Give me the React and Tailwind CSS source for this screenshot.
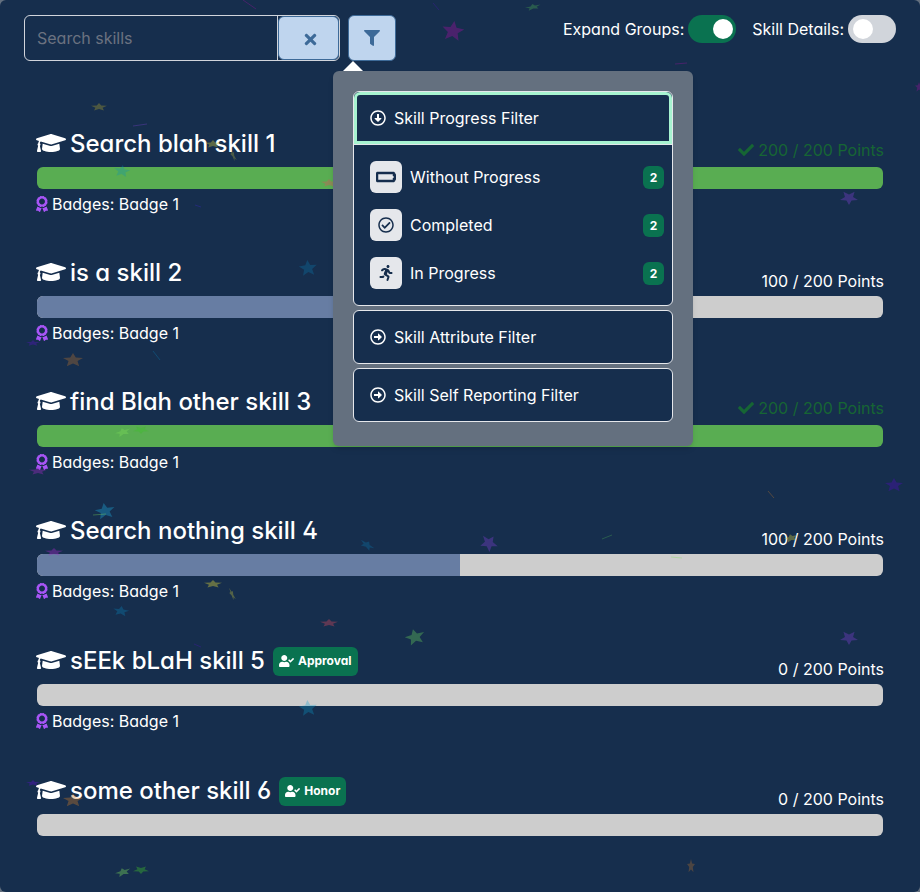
import { useState } from "react";
import {
  FaAward,
  FaBatteryEmpty,
  FaCheck,
  FaFilter,
  FaGraduationCap,
  FaRegArrowAltCircleDown,
  FaRegArrowAltCircleRight,
  FaRegCheckCircle,
  FaRunning,
  FaTimes,
  FaUserCheck,
} from "react-icons/fa";

const skills = [
  { name: "Search blah skill 1", points: 200, badge: "Badge 1" },
  { name: "is a skill 2", points: 100, badge: "Badge 1" },
  { name: "find Blah other skill 3", points: 200, badge: "Badge 1" },
  { name: "Search nothing skill 4", points: 100, badge: "Badge 1" },
  { name: "sEEk bLaH skill 5", points: 0, badge: "Badge 1", tag: "Approval" },
  { name: "some other skill 6", points: 0, tag: "Honor" },
];

const progressFilters = [
  { label: "Without Progress", count: 2, icon: <FaBatteryEmpty size={20} strokeWidth={16} stroke="currentColor" /> },
  { label: "Completed", count: 2, icon: <FaRegCheckCircle size={16} /> },
  { label: "In Progress", count: 2, icon: <FaRunning size={16} /> },
];

// x, y, half width, half height, rotation, colour, opacity
const stars = [
  [453, 31, 11, 10, 8, "#a10fa0", 0.38],
  [533, 7, 8, 3, -12, "#4caf50", 0.35],
  [919, 87, 4, 5, 0, "#a10fa0", 0.35],
  [99, 107, 8, 4, 0, "#b5a52a", 0.35],
  [213, 144, 8, 4, 0, "#c6c23c", 0.4],
  [233, 155, 2, 7, -25, "#c6c23c", 0.3],
  [122, 171, 8, 6, 8, "#0a93b5", 0.3],
  [329, 183, 8, 4, 0, "#e84a5f", 0.35],
  [849, 198, 9, 7, 180, "#7c3fd0", 0.38],
  [308, 268, 9, 8, -5, "#0a7fb5", 0.3],
  [33, 343, 7, 3, 0, "#5b12c9", 0.35],
  [73, 360, 10, 7, 0, "#c97a2a", 0.32],
  [123, 432, 8, 4, -18, "#7ee05a", 0.35],
  [141, 430, 8, 4, 180, "#3fbf2a", 0.4],
  [38, 471, 9, 4, 0, "#a32ac9", 0.38],
  [894, 485, 9, 7, 0, "#4b10b5", 0.4],
  [105, 511, 10, 8, -10, "#1f9fd0", 0.4],
  [54, 552, 9, 4, 0, "#a32ac9", 0.4],
  [367, 545, 8, 4, 32, "#0a7fb5", 0.3],
  [489, 543, 9, 8, 35, "#7c3fd0", 0.38],
  [791, 538, 7, 4, -15, "#c6c23c", 0.4],
  [213, 584, 9, 4, 0, "#c6c23c", 0.45],
  [232, 594, 2, 7, -25, "#c6c23c", 0.35],
  [121, 611, 8, 5, 8, "#0a7fb5", 0.35],
  [329, 623, 9, 4, 0, "#e84a5f", 0.35],
  [415, 637, 10, 8, -15, "#5fc05a", 0.4],
  [849, 638, 9, 7, 180, "#7c3fd0", 0.38],
  [308, 708, 9, 8, -5, "#0a9fd0", 0.3],
  [33, 783, 7, 3, 0, "#5b12c9", 0.4],
  [73, 800, 10, 7, 0, "#c97a2a", 0.38],
  [123, 872, 8, 4, -18, "#7ee05a", 0.38],
  [141, 870, 8, 4, 180, "#3fbf2a", 0.4],
  [691, 866, 4, 7, 0, "#c97a2a", 0.3],
];

// x1, y1, x2, y2, colour
const slivers = [
  [243, 0, 256, 9, "#a10fa0"],
  [433, 3, 439, 10, "#4b10b5"],
  [133, 126, 147, 124, "#7c3fd0"],
  [675, 64, 687, 63, "#a10fa0"],
  [195, 205, 201, 207, "#3b23c9"],
  [153, 351, 160, 360, "#0a7fb5"],
  [768, 491, 774, 498, "#c97a2a"],
  [93, 515, 106, 514, "#7ee05a"],
  [602, 539, 612, 535, "#4caf50"],
  [671, 557, 682, 558, "#7ee05a"],
  [194, 644, 201, 647, "#4b10b5"],
];

function Confetti() {
  return (
    <svg
      className="pointer-events-none absolute top-0 left-0"
      width="920"
      height="892"
      viewBox="0 0 920 892"
      aria-hidden="true"
    >
      {stars.map(([x, y, rx, ry, turn, fill, opacity]) => (
        <polygon
          key={x + "-" + y}
          points="0,-1 .28,-.36 1,-.3 .45,.16 .62,.9 0,.5 -.62,.9 -.45,.16 -1,-.3 -.28,-.36"
          transform={`translate(${x} ${y}) rotate(${turn}) scale(${rx} ${ry})`}
          fill={fill}
          fillOpacity={opacity}
        />
      ))}
      {slivers.map(([x1, y1, x2, y2, stroke]) => (
        <line
          key={x1 + "-" + y1}
          x1={x1}
          y1={y1}
          x2={x2}
          y2={y2}
          stroke={stroke}
          strokeOpacity="0.35"
          strokeWidth="1"
        />
      ))}
    </svg>
  );
}

function Toggle({ label, defaultChecked }) {
  return (
    <label className="flex items-center gap-1">
      <span>{label}</span>
      <input type="checkbox" role="switch" defaultChecked={defaultChecked} className="peer sr-only" />
      <span className="flex h-7 w-12 items-center rounded-full bg-[#d1d5db] pr-[3px] pl-[5px] peer-checked:justify-end peer-checked:bg-[#0a7250]">
        <span className="size-5 rounded-full bg-white" />
      </span>
    </label>
  );
}

function FilterPanel() {
  return (
    <div className="absolute top-14 -left-[15px] z-10 w-[360px] rounded-md bg-[#64707f] px-5 pt-5 pb-6 shadow-md">
      <svg className="absolute -top-2.5 left-2.5" width="20" height="10" viewBox="0 0 20 10" aria-hidden="true">
        <path d="M0 10 10 0l10 10z" fill="#fff" />
      </svg>
      <div className="flex flex-col gap-1">
        <section className="rounded-md border border-gray-200 bg-[#162e4d]">
          <button
            type="button"
            aria-expanded="true"
            className="flex h-[53px] w-full items-center gap-2 rounded-t-md border-b border-gray-200 px-4 text-left inset-ring-3 inset-ring-[#a7f3d0]"
          >
            <FaRegArrowAltCircleDown size={16} />
            Skill Progress Filter
          </button>
          <ul className="flex flex-col py-2">
            {progressFilters.map((f) => (
              <li key={f.label}>
                <button type="button" className="flex w-full items-center gap-2 py-2 pr-2 pl-4 text-left">
                  <span className="flex size-8 items-center justify-center rounded-md bg-gray-200 text-[#162e4d]">
                    {f.icon}
                  </span>
                  <span className="flex-1">{f.label}</span>
                  <span className="w-[21px] rounded-md bg-[#0a7250] text-center text-xs leading-[23px] font-bold">
                    {f.count}
                  </span>
                </button>
              </li>
            ))}
          </ul>
        </section>
        {["Skill Attribute Filter", "Skill Self Reporting Filter"].map((title) => (
          <button
            key={title}
            type="button"
            aria-expanded="false"
            className="flex h-[54px] items-center gap-2 rounded-md border border-gray-200 bg-[#162e4d] px-4 text-left"
          >
            <FaRegArrowAltCircleRight size={16} />
            {title}
          </button>
        ))}
      </div>
    </div>
  );
}

function Skill({ name, points, badge, tag }) {
  const done = points === 200;
  return (
    <article>
      <div className={tag ? "flex h-10 items-start justify-between" : "flex h-[39px] items-start justify-between"}>
        <h2
          className={
            tag
              ? "-ml-px flex h-[34px] items-center gap-1 text-2xl font-medium"
              : "-ml-px flex h-8 items-center gap-1 text-2xl font-medium"
          }
        >
          <FaGraduationCap className="h-[26px] w-[30px] pb-0.5" />
          {name}
          {tag && (
            <span className="ml-1 flex h-[29px] items-center gap-1 rounded-md bg-[#0a7250] px-1.5 text-xs font-bold">
              <FaUserCheck className="h-3 w-[15px]" />
              {tag}
            </span>
          )}
        </h2>
        <p
          className={
            done
              ? "-mr-px flex items-center gap-1 self-end pb-[5px] text-[#166534]"
              : "-mr-px self-end pb-[3px]"
          }
        >
          {done && <FaCheck size={16} />}
          {points} / 200 Points
        </p>
      </div>
      <div
        role="progressbar"
        aria-label={name}
        aria-valuenow={points}
        aria-valuemax={200}
        className="h-[22px] overflow-hidden rounded-md bg-[#cdcdcd]"
      >
        <div className={done ? "h-full bg-[#59ad52]" : "h-full bg-[#677da3]"} style={{ width: `${points / 2}%` }} />
      </div>
      {badge && (
        <p className="mt-[3px] -ml-px flex items-center gap-1">
          <FaAward className="h-4 w-3 text-[#a855f7]" />
          Badges: {badge}
        </p>
      )}
    </article>
  );
}

export default function App() {
  const [query, setQuery] = useState("");
  const [open, setOpen] = useState(true);
  return (
    <div className="bg-[#64707f] font-['Inter',sans-serif] text-base text-white [font-feature-settings:'cv02','cv03','cv04','cv11']">
      <main className="relative min-h-screen overflow-hidden rounded-md bg-[#162e4d] pt-[15px]">
        <header className="flex items-start justify-between px-6">
          <div className="flex gap-2">
            <div className="flex h-[46px] w-[316px] rounded-md border border-gray-300">
              <input
                type="text"
                aria-label="Search skills"
                placeholder="Search skills"
                value={query}
                onChange={(e) => setQuery(e.target.value)}
                className="min-w-0 flex-1 border-r border-gray-300 px-3 outline-none placeholder:text-[#6b7280]"
              />
              <button
                type="button"
                aria-label="Clear search"
                onClick={() => setQuery("")}
                className="flex w-[61px] items-center justify-center rounded-md border border-[#3d6a98] bg-[#bfd5ee] pt-0.5 pl-1 text-[#3d6a98]"
              >
                <FaTimes size={17} />
              </button>
            </div>
            <div className="relative">
              <button
                type="button"
                aria-label="Filter skills"
                onClick={() => setOpen(!open)}
                className="flex h-[46px] w-12 items-center justify-center rounded-md border border-[#3d6a98] bg-[#bfd5ee] text-[#3d6a98]"
              >
                <FaFilter size={16} />
              </button>
              {open && <FilterPanel />}
            </div>
          </div>
          <div className="flex gap-4">
            <Toggle label="Expand Groups:" defaultChecked />
            <Toggle label="Skill Details:" />
          </div>
        </header>
        <div className="mt-[67px] flex flex-col gap-[41px] px-[37px]">
          {skills.map((s) => (
            <Skill key={s.name} {...s} />
          ))}
        </div>
        <Confetti />
      </main>
    </div>
  );
}
